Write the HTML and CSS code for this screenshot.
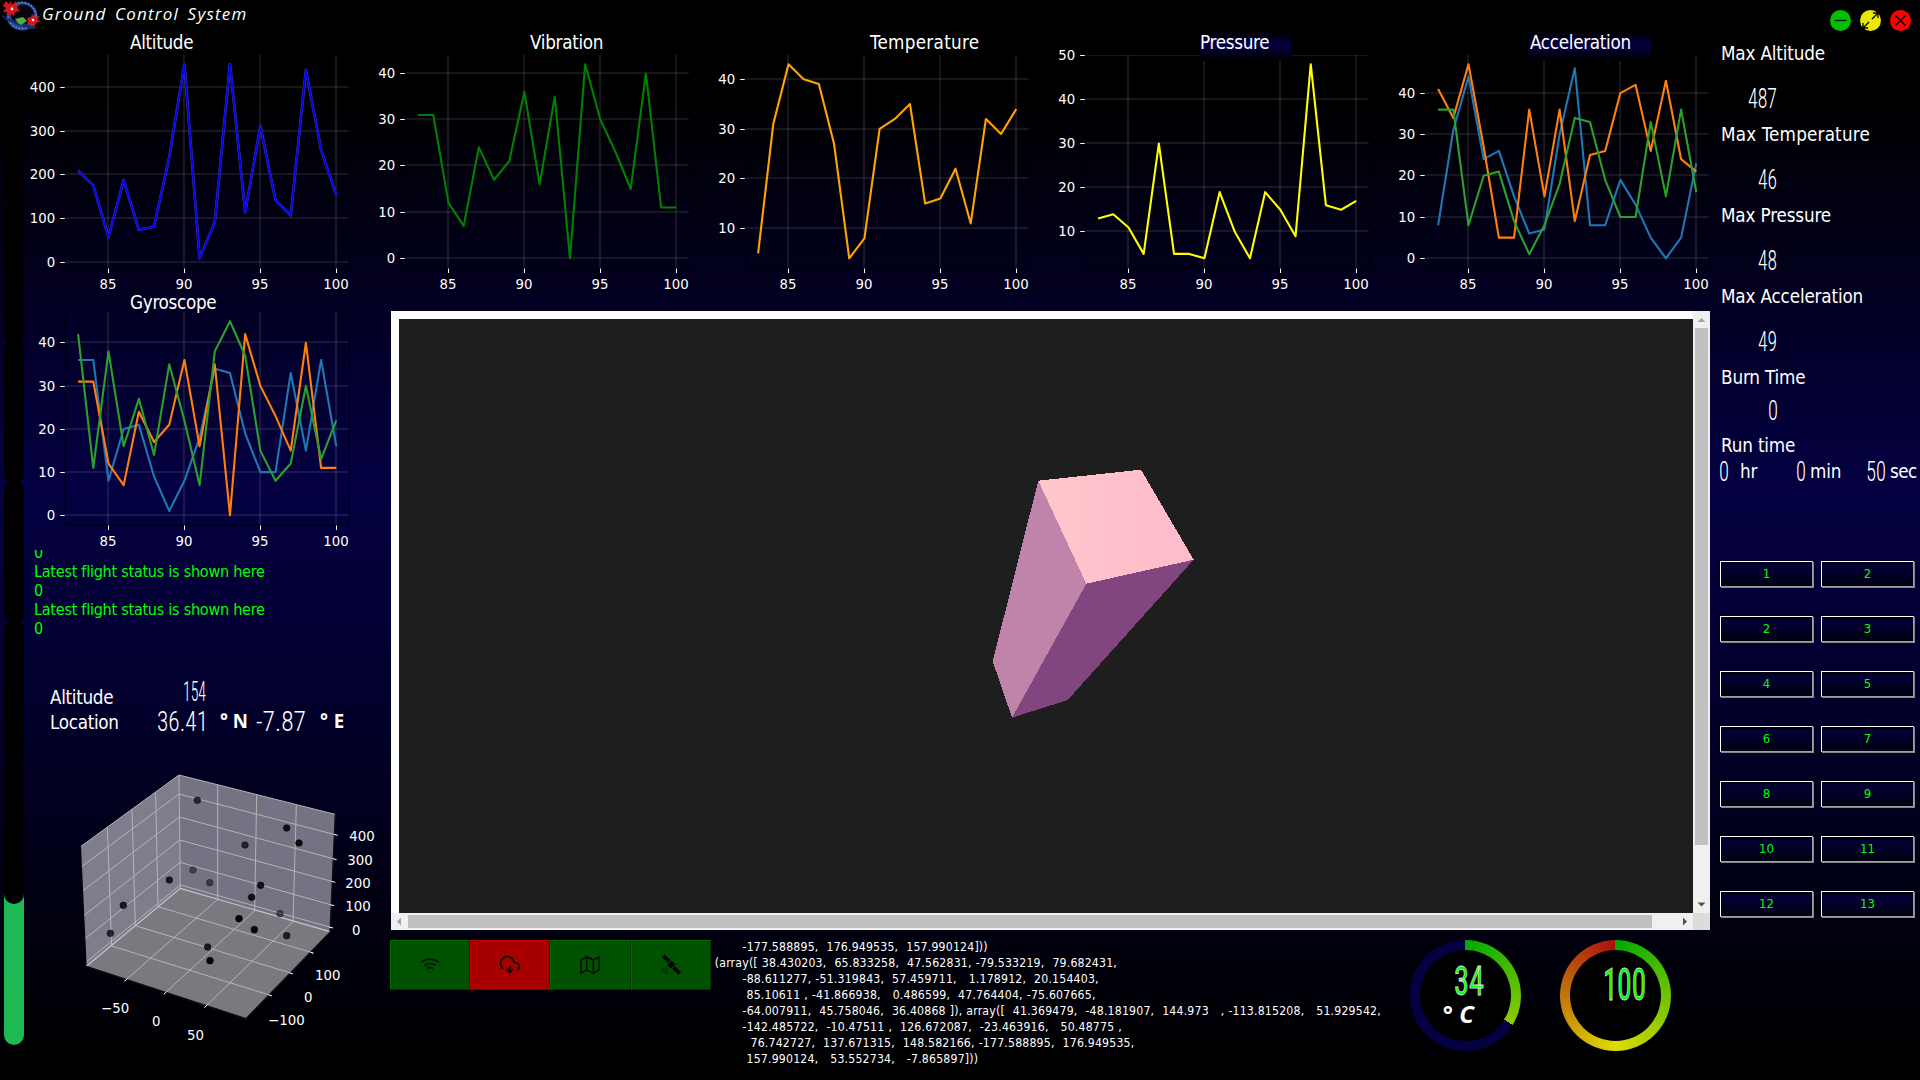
FILE: index.html
```html
<!DOCTYPE html>
<html lang="en">
<head>
<meta charset="utf-8">
<title>Ground Control System</title>
<link rel="stylesheet" href="styles.css">
</head>
<body>
<div class="window">
  <header class="titlebar">
    <svg class="logo" width="40" height="32" viewBox="0 0 40 32">
      <ellipse cx="21" cy="16" rx="15.500" ry="14.500" fill="#234a9a"/>
      <ellipse cx="21" cy="15.500" rx="14" ry="13" fill="none" stroke="#7f9bd0" stroke-width="1.300" stroke-dasharray="1.500 1.800"/>
      <ellipse cx="21.500" cy="15" rx="11.500" ry="10.500" fill="#080510"/>
      <path d="M0 15l12 5 16 5 9 3-7 1-13-4-12-5z" fill="#1b2c6b"/>
      <path d="M14 19l8-2 4 4-6 4-3-2z" fill="#4fae3c"/>
      <path d="M5 1l3 3 2-3 1 4 4-4 0 4 4-1-3 4 3 3-5 1-1 4-3-2-4 2 0-4-4 0 3-4-3-2z" fill="#d8141c"/>
      <path d="M26 18l4-1 1-3 3 3 5-1-3 4 4 1-5 2-2 4-4-3-3 1 1-4z" fill="#d8141c"/>
      <circle cx="11" cy="9" r="1.400" fill="#fff"/><circle cx="32" cy="20" r="1.300" fill="#fff"/>
    </svg>
    <h1>Ground Control System</h1>
    <div class="controls">
      <svg width="21" height="21" viewBox="0 0 21 21"><circle cx="10.500" cy="10.500" r="10.500" fill="#00c000"/><path d="M4.500 10.500h12" stroke="#000" stroke-width="1.300"/></svg>
      <svg width="21" height="21" viewBox="0 0 21 21"><circle cx="10.500" cy="10.500" r="10.500" fill="#e8e800"/><path d="M12 9l6-6M13 3h5v5M9 12l-6 6M3 13v5h5" fill="none" stroke="#000" stroke-width="1.300"/></svg>
      <svg width="21" height="21" viewBox="0 0 21 21"><circle cx="10.500" cy="10.500" r="10.500" fill="#f00"/><path d="M5.500 5.500l10 10M15.500 5.500l-10 10" stroke="#000" stroke-width="1.300"/></svg>
    </div>
  </header>

  <div class="body">
    <div class="levels">
      <i></i><i></i><i></i><i></i><i></i><i></i><i class="full"></i>
    </div>

    <main>
      <section class="charts">
        <div class="chart"><h2 class="t-alt">Altitude</h2><svg data-chart="altitude"></svg></div>
        <div class="chart"><h2 class="t-vib">Vibration</h2><svg data-chart="vibration"></svg></div>
        <div class="chart"><h2 class="t-temp">Temperature</h2><svg data-chart="temperature"></svg></div>
        <div class="chart"><h2 class="t-pres shaded">Pressure</h2><svg data-chart="pressure"></svg></div>
        <div class="chart"><h2 class="t-acc shaded">Acceleration</h2><svg data-chart="acceleration"></svg></div>
      </section>

      <section class="lower">
        <div class="left">
          <div class="chart gyro"><h2 class="t-alt">Gyroscope</h2><svg data-chart="gyroscope"></svg></div>
          <div class="status"><p>0</p><p>Latest flight status is shown here</p><p>0</p><p>Latest flight status is shown here</p><p>0</p></div>
          <div class="telemetry">
            <div class="row">
              <span class="name">Altitude</span>
              <svg class="lcd alt" width="24" height="20"><text x="0" y="19.500" textLength="23" lengthAdjust="spacingAndGlyphs">154</text></svg>
            </div>
            <div class="row">
              <span class="name">Location</span>
              <svg class="lcd loc" width="52" height="20"><text x="0" y="19.500" textLength="51" lengthAdjust="spacingAndGlyphs">36.41</text></svg>
              <b class="north">° N</b>
              <svg class="lcd loc" width="52" height="20"><text x="0" y="19.500" textLength="50" lengthAdjust="spacingAndGlyphs">-7.87</text></svg>
              <b class="east">° E</b>
            </div>
          </div>
          <svg class="scatter" width="362" height="290" viewBox="84 390 1086 870">
            <path d="M537 405L243 619 260 978 541 745z" fill="#7f7d8c"/>
            <path d="M537 405L1005 523 990 875 541 745z" fill="#747283"/>
            <path d="M541 745L990 875 738 1135 260 978z" fill="#797980"/>
            <g class="wire">
              <path d="M322 562L335 918 815 1067M396 510L406 857 878 1001M467 458L474 800 940 939"/>
              <path d="M653 436V778L375 1022M770 466L764 812 493 1061M889 496L879 845 615 1101"/>
              <path d="M245 680L537 462 1005 584M249 752L538 531 1003 657M253 826L539 600 999 725M257 895L540 667 995 795M260 965L541 735 992 862"/>
              <path d="M243 619L537 405 1005 523M537 405L541 745"/>
            </g>
            <path d="M260 978L541 745 990 875" fill="none" stroke="#c8c8d0" stroke-width="3.500"/>
            <path d="M260 980L738 1136 990 877 1006 523" fill="none" stroke="#111" stroke-width="4"/>
            <path class="tick" d="M1001 583l12 3M998 656l12 3M994 724l12 3M990 794l12 3M987 861l12 3M930 936l10 4M868 998l10 4M805 1064l10 4M382 1016l-9 8M500 1055l-9 8M622 1095l-9 8"/>
            <g data-points></g>
            <g class="labels">
              <text x="1048" y="604">400</text><text x="1042" y="676">300</text><text x="1036" y="745">200</text><text x="1036" y="814">100</text><text x="1056" y="884">0</text>
              <text x="303" y="1118">−50</text><text x="456" y="1157">0</text><text x="561" y="1199">50</text>
              <text x="804" y="1154">−100</text><text x="912" y="1086">0</text><text x="945" y="1021">100</text>
            </g>
          </svg>
        </div>

        <div class="center">
          <div class="viewer">
            <div class="scene">
              <svg width="1294" height="594" viewBox="399 319 1294 594" shape-rendering="crispEdges">
                <defs><linearGradient id="top"><stop offset="0" stop-color="#ffc6cd"/><stop offset="1" stop-color="#ffbbca"/></linearGradient></defs>
                <path d="M1038.300 480.700L1141 469.700 1193.700 559.700 1086.300 583.700z" fill="url(#top)"/>
                <path d="M1038.300 480.700L1086.300 583.700 1012 717.700 992.700 661.300z" fill="#c083aa"/>
                <path d="M1086.300 583.700L1193.700 559.700 1067.700 700 1012 717.700z" fill="#81457f"/>
              </svg>
            </div>
            <div class="vbar">
              <svg width="17" height="17"><path d="M4.500 11l4-4 4 4z" fill="#a3a3a3"/></svg>
              <span></span>
              <svg width="17" height="17"><path d="M4.500 6.500l4 4 4-4z" fill="#505050"/></svg>
            </div>
            <div class="hbar">
              <svg width="17" height="17"><path d="M10 4.500l-4 4 4 4z" fill="#a3a3a3"/></svg>
              <span></span>
              <svg width="17" height="17"><path d="M7 4.500l4 4-4 4z" fill="#505050"/></svg>
            </div>
            <div class="corner"></div>
          </div>

          <div class="dock">
            <div class="modes">
              <button><svg width="20" height="20" viewBox="0 0 24 24"><path d="M1.500 9a15.500 15.500 0 0 1 21 0M5 12.800a10.600 10.600 0 0 1 14 0M8.500 16.300a5.500 5.500 0 0 1 7 0M12 20v1"/></svg></button>
              <button class="alert"><svg width="20" height="20" viewBox="0 0 24 24"><path d="M8 17l4 4 4-4M12 12v9M20.900 18.100A5 5 0 0 0 18 9h-1.300A8 8 0 1 0 4 16.300"/></svg></button>
              <button><svg width="20" height="20" viewBox="0 0 24 24"><path d="M1 6v16l7-4 8 4 7-4V2l-7 4-8-4-7 4zM8 2v16M16 6v16"/></svg></button>
              <button><svg width="20" height="20" viewBox="0 0 24 24"><path class="panel" d="M3 1l7 7M15 15l7.500 7"/><path class="hull" d="M9.500 14.500l5.500-5.500"/><path class="wave" d="M1 15a7 7 0 0 0 7 7M3 15a5 5 0 0 0 5 5M5.500 15a3 3 0 0 0 2.500 2.500"/></svg></button>
            </div>
<pre class="console">       -177.588895,  176.949535,  157.990124]))
(array([ 38.430203,  65.833258,  47.562831, -79.533219,  79.682431,
       -88.611277, -51.319843,  57.459711,   1.178912,  20.154403,
        85.10611 , -41.866938,   0.486599,  47.764404, -75.607665,
       -64.007911,  45.758046,  36.40868 ]), array([  41.369479,  -48.181907,  144.973   , -113.815208,   51.929542,
       -142.485722,  -10.47511 ,  126.672087,  -23.463916,   50.48775 ,
         76.742727,  137.671315,  148.582166, -177.588895,  176.949535,
        157.990124,   53.552734,   -7.865897]))</pre>
            <div class="gauge temp"><div class="dial">
              <svg class="lcd neon" width="34" height="32"><text x="1" y="30" textLength="30" lengthAdjust="spacingAndGlyphs">34</text></svg>
              <em>° C</em>
            </div></div>
            <div class="gauge power"><div class="dial">
              <svg class="lcd neon" width="46" height="36"><text x="0" y="33" textLength="43" lengthAdjust="spacingAndGlyphs">100</text></svg>
            </div></div>
          </div>
        </div>
      </section>
    </main>

    <aside>
      <div class="metric"><span class="name">Max Altitude</span><svg class="lcd" width="30" height="20"><text x="0" y="19.500" textLength="29" lengthAdjust="spacingAndGlyphs">487</text></svg></div>
      <div class="metric"><span class="name wide">Max Temperature</span><svg class="lcd" width="20" height="20"><text x="0" y="19.500" textLength="19" lengthAdjust="spacingAndGlyphs">46</text></svg></div>
      <div class="metric"><span class="name">Max Pressure</span><svg class="lcd" width="20" height="20"><text x="0" y="19.500" textLength="19" lengthAdjust="spacingAndGlyphs">48</text></svg></div>
      <div class="metric"><span class="name">Max Acceleration</span><svg class="lcd" width="20" height="20"><text x="0" y="19.500" textLength="19" lengthAdjust="spacingAndGlyphs">49</text></svg></div>
      <div class="metric short"><span class="name">Burn Time</span><svg class="lcd" width="10" height="20"><text x="0" y="19.500" textLength="10" lengthAdjust="spacingAndGlyphs">0</text></svg></div>
      <div class="name">Run time</div>
      <div class="clock">
        <svg class="lcd" width="10" height="20"><text x="0" y="19.500" textLength="10" lengthAdjust="spacingAndGlyphs">0</text></svg><span class="name hr">hr</span>
        <svg class="lcd" width="10" height="20"><text x="0" y="19.500" textLength="10" lengthAdjust="spacingAndGlyphs">0</text></svg><span class="name min">min</span>
        <svg class="lcd" width="20" height="20"><text x="0" y="19.500" textLength="20" lengthAdjust="spacingAndGlyphs">50</text></svg><span class="name sec">sec</span>
      </div>
      <div class="keypad">
        <button>1</button><button>2</button>
        <button>2</button><button>3</button>
        <button>4</button><button>5</button>
        <button>6</button><button>7</button>
        <button>8</button><button>9</button>
        <button>10</button><button>11</button>
        <button>12</button><button>13</button>
      </div>
    </aside>
  </div>
</div>
<script src="charts.js"></script>
</body>
</html>
```
FILE: styles.css
```css
* { box-sizing: border-box; margin: 0; padding: 0; }
body {
  width: 1920px; height: 1080px; overflow: hidden; background: #000; color: #fff;
  font-family: "DejaVu Sans Condensed", "DejaVu Sans", sans-serif; font-stretch: condensed;
}
svg { display: block; overflow: visible; }
.window {
  width: 1920px; height: 1080px; display: flex; flex-direction: column;
  background: linear-gradient(#000 0, #000 90px, #02001c 270px, #040042 485px, #02002c 700px, #000010 920px, #000 1080px);
}

.titlebar { height: 32px; display: flex; align-items: flex-start; }
.logo { margin-left: 1px; }
.titlebar h1 { margin-left: 1px; font: italic 400 17px/27px "Open Sans", "Noto Sans", sans-serif; letter-spacing: 1.200px; word-spacing: 3px; white-space: nowrap; }
.controls { margin: 10px 9px 0 auto; display: flex; gap: 9px; }

.body { flex: 1; display: flex; min-height: 0; }
.levels { width: 28px; padding: 28px 0 0 4px; display: flex; flex-direction: column; }
.levels i { width: 20px; height: 144px; margin-bottom: -4px; border-radius: 10px; background: #000; flex: none; position: relative; z-index: 1; }
.levels .full { height: 159px; margin-top: -14px; background: #1db954; border-radius: 0 0 10px 10px; z-index: 0; }

main { width: 1683px; display: flex; flex-direction: column; }
.charts { height: 260px; display: grid; grid-template-columns: repeat(5, 340px); }
.chart h2 { font-size: 18.700px; font-weight: 400; line-height: 21px; height: 29px; margin-bottom: -7px; width: max-content; position: relative; z-index: 1; letter-spacing: -0.300px; }
.chart svg { width: 323px; height: 238px; }
.gyro h2 { margin-bottom: -10px; }
.t-alt { margin-left: 102px; }
.t-vib { margin-left: 162px; }
.t-temp { margin-left: 162px; }
.chart .t-temp { letter-spacing: 0.300px; }
.t-pres { margin-left: 152px; }
.t-acc { margin-left: 142px; }
.chart .shaded { background: linear-gradient(#000, #040042 42%, #000); }
.chart .t-pres { width: 91px; }
.chart .t-acc { width: 121px; }
.chart text, .labels text { font-family: "DejaVu Sans", sans-serif; font-stretch: normal; font-size: 13.300px; fill: #fff; }

.lower { display: flex; height: 788px; }
.left { width: 362px; display: flex; flex-direction: column; }
.gyro { height: 258px; }
.status { height: 90px; overflow: hidden; padding-left: 6px; color: #0f0; font-size: 16px; line-height: 19px; }
.status p:first-child { margin-top: -7px; }
.status p { letter-spacing: -0.240px; white-space: nowrap; }
.name { font-size: 18.700px; line-height: 21px; letter-spacing: -0.150px; white-space: nowrap; }
.name.wide { letter-spacing: 0.180px; }
.telemetry { height: 130px; padding: 47px 0 0 22px; }
.row { height: 25px; display: flex; align-items: flex-start; }
.row .name { width: 107px; letter-spacing: -0.300px; }
.row b { font: bold 18.700px/21px "Noto Sans", sans-serif; margin-top: -2px; white-space: nowrap; }
.lcd { flex: none; }
.lcd text { font-family: Roboto, sans-serif; font-weight: 300; font-size: 27px; fill: #fff; }
.lcd.alt { margin: -6px 0 0 26px; }
.lcd.loc { margin-top: -1px; }
.north { width: 36px; margin-left: 11px; }
.row .east { margin-left: 12px; letter-spacing: 0.500px; }
.wire path { fill: none; stroke: #b4b4b4; stroke-width: 3; }
.tick { stroke: #fff; stroke-width: 3; }
.labels text { font-size: 40px; }

.center { width: 1321px; padding: 19px 0 0 1px; }
.viewer { width: 1319px; height: 619px; background: #fff; display: grid; grid-template-columns: 1302px 17px; grid-template-rows: 602px 17px; }
.scene { padding: 8px 0 0 8px; }
.scene svg { background: #1e1e1e; }
.vbar, .hbar { background: #f0f0f0; display: flex; }
.vbar { flex-direction: column; }
.vbar span { width: 13px; height: 517px; margin: 0 2px 51px; background: #c0c0c0; }
.hbar span { width: 1244px; height: 13px; margin: 2px 24px 2px 0; background: #c0c0c0; }
.corner { background: #dcdcdc; }

.dock { display: flex; margin-top: 10px; margin-left: -1px; }
.modes { display: flex; height: 50px; }
.modes button { width: 80.200px; height: 50px; display: grid; place-items: center; background: #005200; border: 1px solid; border-color: #006a00 #003600 #003600 #006a00; }
.modes .alert { background: #a80000; border-color: #c00000 #7a0000 #7a0000 #c00000; }
.modes path { fill: none; stroke: #001400; stroke-width: 2; stroke-linejoin: round; }
.modes .panel { stroke: #000; stroke-width: 4.500; }
.modes .hull { stroke: #000; stroke-width: 6; }
.modes .wave { stroke-width: 1; }
.console { width: 695px; margin: -1px 0 0 4px; font-family: inherit; font-size: 12.200px; line-height: 16px; letter-spacing: 0.190px; word-spacing: 0.300px; }
.gauge { width: 111px; height: 111px; border-radius: 50%; padding: 10px; flex: none; }
.temp { background: conic-gradient(#00aa00, #8fcc00 122deg, #040042 122deg); }
.power { margin-left: 39px; background: conic-gradient(#00aa00, #dcdc00 180deg, #aa1010); }
.dial { width: 91px; height: 91px; border-radius: 50%; background: #000; padding-top: 15px; }
.neon text { fill: #0f0; stroke: #ddd; stroke-width: 0.800px; font-weight: 400; }
.temp .neon { margin-left: 33px; }
.temp .neon text { font-size: 41px; }
.power .neon { margin: 2px 0 0 33px; }
.power .neon text { font-size: 45px; }
.dial em { display: block; font: italic bold 24px/24px "Noto Sans", sans-serif; margin: 5px 0 0 23px; }

aside { width: 209px; padding: 11px 0 0 10px; }
.metric { height: 81px; display: flex; flex-direction: column; align-items: flex-start; }
.metric .lcd { margin: 24px 0 0 27px; }
.metric .lcd[width="20"] { margin-left: 37px; }
.metric.short { height: 68px; }
.metric.short .lcd { margin: 12px 0 0 47px; }
.clock { display: flex; height: 20px; margin: 5px 0 0 -2px; }
.clock .hr { width: 67px; padding-left: 11px; }
.clock .min { width: 60px; padding-left: 4px; }
.clock .sec { padding-left: 4px; letter-spacing: -0.600px; }
.keypad { margin-top: 80px; margin-left: -1px; display: grid; grid-template-columns: 93px 93px; gap: 28px 8px; }
.keypad button { height: 26px; margin-bottom: 1px; color: #0f0; font: 13px/22px "DejaVu Sans Condensed", "DejaVu Sans", sans-serif; border: 1px solid; border-color: #fff #a0a0a0 #a0a0a0 #fff; background: linear-gradient(#000, #040038 15%, #000010); box-shadow: 1px 1px 0 #888; }
```
FILE: charts.js
```js
const NS = 'http://www.w3.org/2000/svg';
const vibration = [31, 31, 12, 7, 24, 17, 21, 36, 16, 35, 0, 42, 30, 23, 15, 40, 11, 11];
const lateral = [36, 36, 8, 20, 21, 9, 1, 8, 18, 34, 33, 19, 10, 10, 33, 15, 36, 16];
const altitude = [210, 176, 58, 188, 75, 82, 240, 452, 10, 92, 452, 115, 311, 142, 108, 439, 257, 154];
const charts = {
  altitude: { ticks: [0, 100, 200, 300, 400], series: [['#5a4a78', altitude, 2.6], ['#0000ff', altitude, 2]] },
  vibration: { ticks: [0, 10, 20, 30, 40], series: [['#008000', vibration]] },
  temperature: { ticks: [10, 20, 30, 40], series: [['#ffa500', [5, 31, 43, 40, 39, 27, 4, 8, 30, 32, 35, 15, 16, 22, 11, 32, 29, 34]]] },
  pressure: { ticks: [10, 20, 30, 40, 50], series: [['#ffff00', [13, 14, 11, 5, 30, 5, 5, 4, 19, 10, 4, 19, 15, 9, 48, 16, 15, 17]]] },
  acceleration: { ticks: [0, 10, 20, 30, 40], series: [
    ['#1f77b4', [8, 31, 44, 24, 26, 15, 6, 7, 30, 46, 8, 8, 19, 13, 5, 0, 5, 23]],
    ['#ff7f0e', [41, 34, 47, 27, 5, 5, 36, 15, 36, 9, 25, 26, 40, 42, 26, 43, 24, 21]],
    ['#2ca02c', lateral]] },
  gyroscope: { ticks: [0, 10, 20, 30, 40], series: [
    ['#1f77b4', lateral],
    ['#ff7f0e', vibration],
    ['#2ca02c', [42, 11, 38, 16, 27, 14, 35, 22, 7, 38, 45, 37, 15, 8, 12, 30, 13, 22]]] }
};

function add(parent, tag, attrs, text) {
  const el = document.createElementNS(NS, tag);
  for (const k in attrs) el.setAttribute(k, attrs[k]);
  if (text !== undefined) el.textContent = text;
  parent.appendChild(el);
}

const L = 37.2, W = 284, T = 0.5, H = 213.5;
for (const svg of document.querySelectorAll('[data-chart]')) {
  const { ticks, series } = charts[svg.dataset.chart];
  const all = series.flatMap(s => s[1]);
  const lo = Math.min(...all), hi = Math.max(...all), pad = (hi - lo) * 0.05;
  const X = v => L + (v - 82.15) / 18.7 * W;
  const Y = v => T + H - (v - lo + pad) / (hi - lo + 2 * pad) * H;
  for (const v of [85, 90, 95, 100]) {
    const x = Math.round(X(v));
    add(svg, 'path', { d: `M${x} ${T}V${T + H}`, stroke: '#fff', 'stroke-opacity': 0.09, 'stroke-width': 2 });
    add(svg, 'path', { d: `M${x + 0.5} ${T + H}v5`, stroke: '#fff' });
    add(svg, 'text', { x, y: 235, 'text-anchor': 'middle' }, v);
  }
  for (const v of ticks) {
    const y = Math.round(Y(v) - 0.4);
    add(svg, 'path', { d: `M${L} ${y}h${W}`, stroke: '#fff', 'stroke-opacity': 0.09, 'stroke-width': 2 });
    add(svg, 'path', { d: `M${L} ${y + 0.5}h-5`, stroke: '#fff' });
    add(svg, 'text', { x: L - 10, y: y + 5, 'text-anchor': 'end' }, v);
  }
  add(svg, 'rect', { x: L, y: T, width: W, height: H, fill: 'none', stroke: '#000' });
  for (const [color, data, width] of series) {
    add(svg, 'polyline', { points: data.map((v, i) => `${X(83 + i)},${Y(v)}`).join(' '), fill: 'none', stroke: color, 'stroke-width': width || 2.1, 'stroke-linejoin': 'round' });
  }
}

const points = [[592, 481, 0.7], [860, 564, 0.85], [897, 609, 0.9], [735, 615, 0.7], [579, 690, 0.45], [508, 720, 0.8], [629, 728, 0.5], [782, 736, 0.85], [755, 772, 0.85], [370, 796, 0.8], [840, 821, 0.5], [331, 880, 0.75], [717, 836, 1], [763, 869, 0.95], [860, 887, 0.75], [623, 921, 0.8], [630, 962, 1]];
const cloud = document.querySelector('[data-points]');
for (const [cx, cy, o] of points) {
  add(cloud, 'circle', { cx, cy, r: 10, 'fill-opacity': o, stroke: '#000', 'stroke-width': 2, 'stroke-opacity': o });
}
```
